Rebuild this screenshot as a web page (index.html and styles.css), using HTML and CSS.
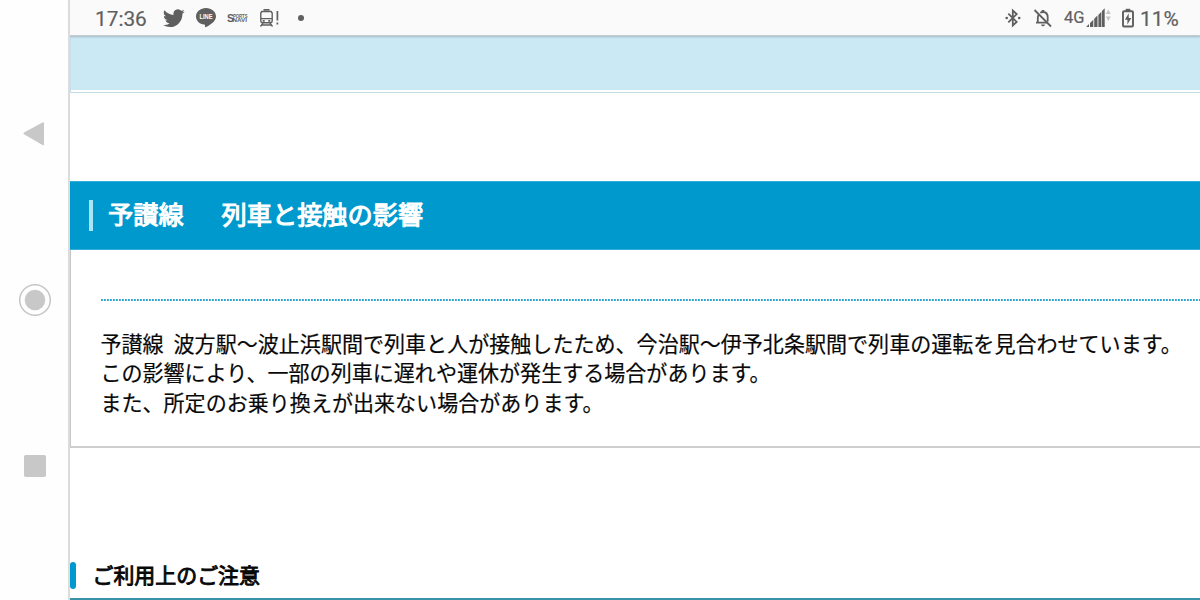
FILE: index.html
```html
<!DOCTYPE html>
<html lang="ja">
<head>
    <meta charset="UTF-8">
    <meta name="viewport" content="width=device-width, initial-scale=1.0">
    <title>運行情報</title>
    <link rel="stylesheet" href="styles.css">
</head>
<body>
    <nav class="nav-bar">
        <svg class="nav-icon" width="36" height="36" viewBox="0 0 36 36">
            <path d="M7.500 17.500 L26 7.300 V28.200 Z" fill="#c8c8c8" stroke="#c8c8c8" stroke-width="2" stroke-linejoin="round"/>
        </svg>
        <svg class="nav-icon" width="36" height="36" viewBox="0 0 36 36">
            <circle cx="18" cy="18" r="15.3" fill="none" stroke="#c6c6c6" stroke-width="1.5"/>
            <circle cx="18" cy="18" r="10.3" fill="#c8c8c8"/>
        </svg>
        <svg class="nav-icon" width="36" height="36" viewBox="0 0 36 36">
            <rect x="7" y="7" width="22" height="22" rx="1.8" fill="#c8c8c8"/>
        </svg>
    </nav>

    <div class="screen">
        <header class="status-bar">
            <span class="clock">17:36</span>
            <!-- Twitter -->
            <svg class="icon-bird" width="22" height="22" viewBox="0 0 24 24" fill="#5f5f5f">
                <path d="M23.6 4.9a9.5 9.5 0 0 1-2.7.8 4.8 4.8 0 0 0 2.1-2.7 9.6 9.6 0 0 1-3.1 1.2 4.8 4.8 0 0 0-8.3 4.4A13.6 13.6 0 0 1 1.7 3.6a4.8 4.8 0 0 0 1.5 6.5 4.8 4.8 0 0 1-2.2-.6v.1a4.8 4.8 0 0 0 3.9 4.7 4.9 4.9 0 0 1-2.2.1 4.8 4.8 0 0 0 4.5 3.3A9.7 9.7 0 0 1 .1 19.700a13.700 13.700 0 0 0 7.400 2.200c8.900 0 13.900-7.500 13.700-14.500a9.700 9.700 0 0 0 2.400-2.500z"/>
            </svg>
            <!-- LINE -->
            <svg class="icon-line" width="22" height="22" viewBox="0 0 22 22">
                <path d="M11 1C5.500 1 1 4.700 1 9.400c0 4.100 3.500 7.500 8.200 8.200.9.200.9.700.8 1.600-.1.800 0 1.300.8.900C14.500 18.200 21 14.500 21 9.400 21 4.700 16.500 1 11 1z" fill="#5f5f5f"/>
                <text x="4.500" y="11.800" class="line-text" textLength="13" lengthAdjust="spacingAndGlyphs">LINE</text>
            </svg>
            <!-- Sports navi -->
            <svg class="icon-navi" width="22" height="14" viewBox="0 0 22 14">
                <text x="0" y="10.800" class="navi-big">S</text>
                <text x="6" y="7.300" class="navi-small" textLength="14.500" lengthAdjust="spacingAndGlyphs">PORTS</text>
                <text x="5.500" y="11.400" class="navi-small" textLength="14.500" lengthAdjust="spacingAndGlyphs">NAVI</text>
            </svg>
            <!-- train -->
            <svg class="icon-train" width="22" height="20" viewBox="0 0 22 20">
                <path d="M4.500 1.800h6M2.800 3.500h9.400M1.800 5v8q0 1.700 1.700 1.700h8q1.700 0 1.700-1.700V5l-1-1.500H2.800zM1.800 10.600h11.400" fill="none" stroke="#5f5f5f" stroke-width="1.400"/>
                <path d="M3.700 12h2v1.700h-2zM9.300 12h2v1.700h-2z" fill="#5f5f5f"/>
                <path d="M4 15l-2.500 3.500M11 15l2.500 3.500M3 17h9" stroke="#5f5f5f" stroke-width="1.300"/>
                <path d="M18.400 3v9.500M18.400 14.500v2" stroke="#5f5f5f" stroke-width="1.700"/>
            </svg>
            <span class="more-dot"></span>

            <!-- Bluetooth -->
            <svg class="icon-bt" width="16" height="20" viewBox="0 0 16 20">
                <path d="M3.300 5.600l8.400 8.300-3.900 3.600V2.500l3.900 3.600-8.400 8.300" fill="none" stroke="#5f5f5f" stroke-width="1.800"/>
                <circle cx="1.700" cy="10" r="1.300" fill="#5f5f5f"/>
                <circle cx="14.200" cy="10" r="1.300" fill="#5f5f5f"/>
            </svg>
            <!-- muted bell -->
            <svg class="icon-bell" width="20" height="20" viewBox="0 0 20 20">
                <path d="M5.600 6.800Q4.800 8 4.800 10v4.700H15M3 14.700h2M7.300 4.900Q8.500 4 10 4q4.700 0 4.700 5.500v4" fill="none" stroke="#5f5f5f" stroke-width="1.800"/>
                <path d="M8.700 2h2.600v2.500H8.700zM8 16.400h4q-.5 1.900-2 1.900t-2-1.900z" fill="#5f5f5f"/>
                <path d="M1.500 2L18 18.500" stroke="#5f5f5f" stroke-width="1.800"/>
            </svg>
            <span class="network">4G</span>
            <!-- signal and data arrows -->
            <svg class="icon-signal" width="26" height="20" viewBox="0 0 26 20">
                <path d="M0 19l3-3v3zM4 15l3.300-3.300V19H4zM8.200 10.800l3.300-3.300V19H8.200zM12.400 6.700l3-3V19h-3zM16 3l2.700-2.700V19H16z" fill="#5f5f5f"/>
                <path d="M19.800 6l2.500-4.500L24.800 6zM19.800 8.500h5L22.300 13z" fill="#c4c4c4"/>
            </svg>
            <!-- battery -->
            <svg class="icon-battery" width="12" height="20" viewBox="0 0 12 20">
                <path d="M3.700.800h4.600v2.500H3.700z" fill="#5f5f5f"/>
                <rect x="1" y="3.200" width="10" height="15.300" rx="1" fill="none" stroke="#5f5f5f" stroke-width="1.900"/>
                <path d="M6.700 5.200L2.900 11.700h2.500v4.800l3.900-6.500H6.700z" fill="#5f5f5f"/>
            </svg>
            <span class="percent">11%</span>
        </header>

        <main class="page">
            <div class="top-band"></div>

            <section class="info">
                <h2 class="info-title"><span>予讃線</span><span>列車と接触の影響</span></h2>
                <div class="info-body">
                    <svg class="dotted" width="1100" height="2"><path d="M0 1H1100"/></svg>
                    <p class="info-text"><span class="line-name">予讃線</span>波方駅～波止浜駅間で列車と人が接触したため、今治駅～伊予北条駅間で列車の運転を見合わせています。<br>この影響により、一部の列車に遅れや運休が発生する場合があります。<br>また、所定のお乗り換えが出来ない場合があります。</p>
                </div>
            </section>

            <h3 class="notice-title"><span>ご利用上のご注意</span></h3>
        </main>
    </div>
</body>
</html>
```

FILE: styles.css
```css
* {
    box-sizing: border-box;
}

body {
    margin: 0;
    display: flex;
    width: 1200px;
    height: 600px;
    overflow: hidden;
    background: #fff;
    color: #080808;
    font-family: "Noto Sans CJK JP", sans-serif;
}

/* Android navigation */
.nav-bar {
    flex: none;
    width: 70px;
    height: 600px;
    padding: 116px 0 116px 17px;
    display: flex;
    flex-direction: column;
    justify-content: space-between;
    background: #fefefe;
    border-right: 2px solid #dcdcdc;
}

.nav-icon {
    display: block;
}

.screen {
    flex: none;
    width: 1130px;
    height: 600px;
    overflow: hidden;
}

/* status bar */
.status-bar {
    position: relative;
    display: flex;
    align-items: center;
    height: 36px;
    padding-left: 25px;
    background: #fafafa;
    border-bottom: 1px solid #c3cacd;
    box-shadow: 0 1px 2px rgba(0, 0, 0, 0.2);
    color: #5f5f5f;
    font-family: Roboto, sans-serif;
    font-size: 20.8px;
    line-height: 36px;
    white-space: nowrap;
    -webkit-text-stroke: 0.2px #5f5f5f;
}

.status-bar svg {
    flex: none;
}

.clock {
    width: 68px;
    padding-top: 2px;
}

.icon-bird {
    margin-right: 10px;
}

.icon-line {
    margin-right: 10px;
}

.line-text {
    fill: #fff;
    font: bold 6.5px "Liberation Sans", sans-serif;
    -webkit-text-stroke: 0.3px #fff;
}

.icon-navi {
    margin-right: 10px;
    overflow: visible;
}

.navi-big {
    fill: #5f5f5f;
    font: bold 10.5px "Liberation Sans", sans-serif;
    -webkit-text-stroke: 0.5px #5f5f5f;
}

.navi-small {
    fill: #5f5f5f;
    font: bold 5.6px "Liberation Sans", sans-serif;
    -webkit-text-stroke: 0.4px #5f5f5f;
}

.icon-train {
    margin-right: 17px;
}

.more-dot {
    width: 6px;
    height: 6px;
    border-radius: 50%;
    background: #5f5f5f;
}

.icon-bt {
    margin-left: auto;
    margin-right: 12px;
}

.icon-bell {
    margin-right: 11px;
}

.network {
    width: 22px;
    font-size: 16.5px;
}

.icon-signal {
    margin-right: 10px;
}

.icon-battery {
    margin-right: 6px;
}

.percent {
    width: 60px;
    padding-top: 2px;
}

/* page */
.top-band {
    height: 57px;
    background: #cbe8f5;
    border: 1px solid #c4dfea;
    border-width: 0 0 1px 1px;
    box-shadow: inset 0 -2px #fff;
}

.info {
    margin-top: 88px;
}

.info-title {
    display: flex;
    gap: 38px;
    height: 69px;
    margin: 0;
    padding-left: 38px;
    align-items: center;
    background: #0099cd;
    border: 1px solid #35addb;
    border-width: 1px 0;
    color: #fff;
    font-size: 25.2px;
    font-weight: 400;
    line-height: 60px;
    -webkit-text-stroke: 1.1px #fff;
}

.info-title span {
    padding-bottom: 6px;
}

.info-title::before {
    content: "";
    width: 4px;
    height: 31px;
    margin-left: -19px;
    margin-right: -23px;
    background: #a9e4f7;
}

.info-body {
    height: 198px;
    padding: 49px 0 0 30px;
    border-left: 1px solid #c8c8c8;
    border-bottom: 2px solid #cfcfcf;
}

.dotted {
    display: block;
}

.dotted path {
    stroke: #27a3d0;
    stroke-width: 2;
    stroke-dasharray: 1.8 1.2;
}

.info-text {
    margin: 28px 0 0 -0.6px;
    font-size: 21.06px;
    line-height: 29.3px;
    white-space: nowrap;
    -webkit-text-stroke: 0.2px #080808;
}

.line-name {
    margin-right: 10px;
}

.notice-title {
    display: flex;
    align-items: center;
    height: 39px;
    margin: 113px 0 0;
    padding-bottom: 9px;
    border-bottom: 2px solid #3a93a8;
    font-size: 20.95px;
    font-weight: 400;
    line-height: 24px;
    -webkit-text-stroke: 0.9px #080808;
}

.notice-title span {
    padding-bottom: 3px;
}

.notice-title::before {
    content: "";
    width: 6px;
    height: 27px;
    margin-right: 16.5px;
    border-radius: 3px;
    background: #0099cd;
}
```
